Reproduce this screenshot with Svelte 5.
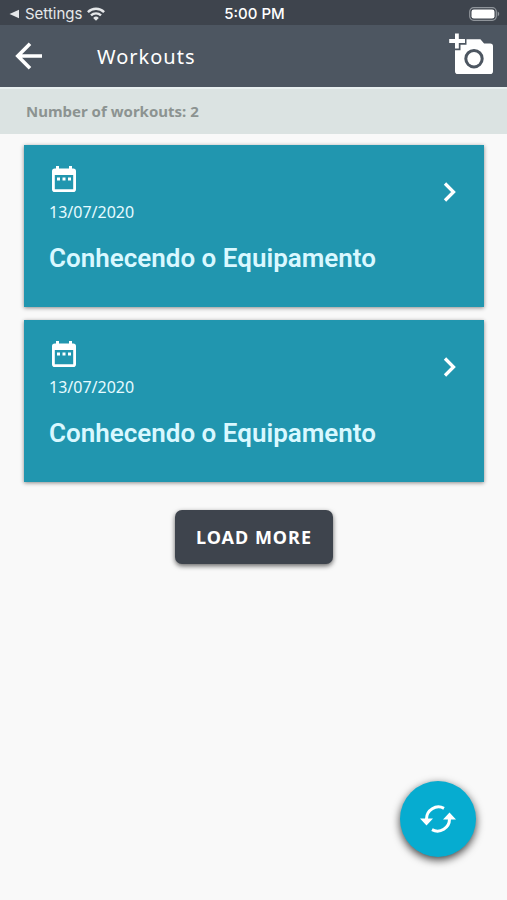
<script>
  const workouts = [
    { id: 1, date: "13/07/2020", title: "Conhecendo o Equipamento" },
    { id: 2, date: "13/07/2020", title: "Conhecendo o Equipamento" },
  ]
</script>

<div class="screen">
  <div class="status">
    <a class="back-app" href="#settings">
      <svg width="11" height="10" viewBox="0 0 11 10" aria-hidden="true">
        <path d="M0.5 5 10 0.7v8.6z" fill="currentColor" />
      </svg>
      <span>Settings</span>
      <svg width="18" height="14" viewBox="0 0 18 14" aria-hidden="true">
        <g fill="none" stroke="currentColor" stroke-width="2.4">
          <path d="M0.9 5.1a11.5 11.5 0 0 1 16.2 0" />
          <path d="M4 8.4a7.1 7.1 0 0 1 10 0" />
        </g>
        <path d="M9 13.8 6.2 10.9a4 4 0 0 1 5.6 0z" fill="currentColor" />
      </svg>
    </a>
    <span class="time">5:00 PM</span>
    <svg class="battery" width="31" height="14" viewBox="0 0 31 14" aria-hidden="true">
      <rect x="0.7" y="0.7" width="26.6" height="12.6" rx="4" fill="none" stroke="#90959b" stroke-width="1.2" />
      <rect x="2.5" y="2.5" width="23" height="9" rx="2.3" fill="#fff" />
      <path d="M28.7 4.6v4.8c2-.9 2-3.9 0-4.8z" fill="#90959b" />
    </svg>
  </div>

  <header class="toolbar">
    <button class="icon-button" aria-label="Back">
      <svg width="28" height="28" viewBox="0 0 28 28" aria-hidden="true">
        <path d="M27 14H3M15 1.8 2.8 14 15 26.2" fill="none" stroke="currentColor" stroke-width="3.6" />
      </svg>
    </button>
    <h1>Workouts</h1>
    <button class="icon-button" aria-label="Add photo">
      <svg width="46" height="46" viewBox="0 0 46 46" aria-hidden="true">
        <path
          fill="currentColor"
          fill-rule="evenodd"
          d="M18.500 6.200h13.900l3.700 4.300h6.100a2.800 2.800 0 0 1 2.800 2.800v24.900a2.800 2.800 0 0 1-2.800 2.800H9.800A2.800 2.800 0 0 1 7 38.200V17.200h5.500v-5.500h6zM26 16a9.700 9.700 0 1 0 0 19.400 9.700 9.700 0 0 0 0-19.400z"
        />
        <circle cx="26" cy="25.700" r="6.700" fill="currentColor" />
        <path d="M7 .5h3.800v5.600H17v3.800h-6.200v5.600H7V9.900H1.200V6.100H7z" fill="currentColor" />
      </svg>
    </button>
  </header>

  <p class="summary">Number of workouts: {workouts.length}</p>

  <main>
    <ul class="list">
      {#each workouts as workout (workout.id)}
        <li>
          <a class="card" href="#workout-{workout.id}">
            <span class="info">
              <svg class="calendar" width="24" height="26" viewBox="0 0 24 26" aria-hidden="true">
                <path
                  fill="currentColor"
                  fill-rule="evenodd"
                  d="M4 0h3v2.500h10V0h3v2.500h1.200A2.800 2.800 0 0 1 24 5.300v17.900a2.800 2.800 0 0 1-2.800 2.800H2.800A2.800 2.800 0 0 1 0 23.200V5.300a2.800 2.800 0 0 1 2.800-2.800H4zM2.800 9v14.200h18.400V9z"
                />
                <path d="M5 11.500h3v3H5zM10.500 11.500h3v3h-3zM16 11.500h3v3h-3z" fill="currentColor" />
              </svg>
              <span class="date">{workout.date}</span>
              <span class="title">{workout.title}</span>
            </span>
            <svg class="chevron" width="14" height="20" viewBox="0 0 14 20" aria-hidden="true">
              <path d="M2 1.500 10.500 10 2 18.500" fill="none" stroke="currentColor" stroke-width="3.300" />
            </svg>
          </a>
        </li>
      {/each}
    </ul>
    <button class="more">LOAD MORE</button>
  </main>

  <button class="sync" aria-label="Refresh">
    <svg width="36" height="28" viewBox="0 0 36 28" aria-hidden="true">
      <g fill="none" stroke="currentColor" stroke-width="3">
        <path d="M24 3.300A12 12 0 0 0 6.500 14" />
        <path d="M12 24.700A12 12 0 0 0 29.500 14" />
      </g>
      <path d="M0 13.500h13L6.500 20.500zM36 14.500H23L29.500 7.500z" fill="currentColor" />
    </svg>
  </button>
</div>

<style>
  :global(body) {
    margin: 0;
    background: #f9f9f9;
  }

  .screen {
    position: relative;
    min-height: 100vh;
    box-sizing: border-box;
    font-family: "Noto Sans", sans-serif;
  }

  button {
    border: none;
    padding: 0;
    color: #fff;
    font-family: inherit;
    cursor: pointer;
  }

  a {
    color: inherit;
    text-decoration: none;
  }

  svg {
    display: block;
    flex: none;
  }

  .status {
    display: grid;
    grid-template-columns: 1fr auto 1fr;
    align-items: center;
    height: 25px;
    padding: 2px 7px 0 9px;
    box-sizing: border-box;
    background: #3e444d;
    color: #fff;
    font-family: Inter, sans-serif;
    font-size: 15px;
  }

  .back-app {
    display: flex;
    align-items: center;
    gap: 5px;
    color: #e6e8ea;
  }

  .time {
    font-weight: 500;
  }

  .battery {
    justify-self: end;
  }

  .toolbar {
    display: flex;
    align-items: center;
    height: 62px;
    padding: 0 13px 0 15px;
    background: #4d5661;
    color: #fff;
  }

  .icon-button {
    background: none;
  }

  h1 {
    flex: 1;
    margin: 0 0 0 54px;
    font-size: 20px;
    font-weight: 400;
    letter-spacing: 1px;
  }

  .summary {
    margin: 0;
    padding: 11px 26px;
    border-top: 2px solid #e8eff0;
    background: #dbe3e2;
    color: #8c9391;
    font-size: 15px;
    font-weight: 700;
    line-height: 23px;
  }

  main {
    display: flex;
    flex-direction: column;
    align-items: center;
    gap: 28px;
    padding: 11px 23px 28px 24px;
  }

  .list {
    display: flex;
    flex-direction: column;
    gap: 13px;
    align-self: stretch;
    margin: 0;
    padding: 0;
    list-style: none;
  }

  .card {
    display: flex;
    justify-content: space-between;
    align-items: flex-start;
    padding: 21px 27px 33px 25px;
    background: #2196af;
    box-shadow: 0 1px 4px rgba(0, 0, 0, 0.45);
    color: #fff;
  }

  .info {
    display: flex;
    flex-direction: column;
  }

  .calendar {
    margin-left: 3px;
  }

  .date {
    margin-top: 8px;
    color: #e6fbff;
    font-size: 16px;
    line-height: 24px;
  }

  .title {
    margin-top: 18px;
    color: #d9f8ff;
    font-family: Roboto, sans-serif;
    font-size: 26px;
    font-weight: 600;
    line-height: 32px;
  }

  .chevron {
    margin-top: 16px;
  }

  .more {
    padding: 15px 21px;
    border-radius: 7px;
    background: #3e444d;
    box-shadow: 0 2px 5px rgba(0, 0, 0, 0.6);
    font-size: 18px;
    font-weight: 700;
    line-height: 24px;
    letter-spacing: 1px;
  }

  .sync {
    position: fixed;
    right: 31px;
    bottom: 43px;
    display: grid;
    place-items: center;
    width: 76px;
    height: 76px;
    border-radius: 50%;
    background: #06acd0;
    box-shadow: 0 3px 8px rgba(0, 0, 0, 0.75);
  }
</style>
